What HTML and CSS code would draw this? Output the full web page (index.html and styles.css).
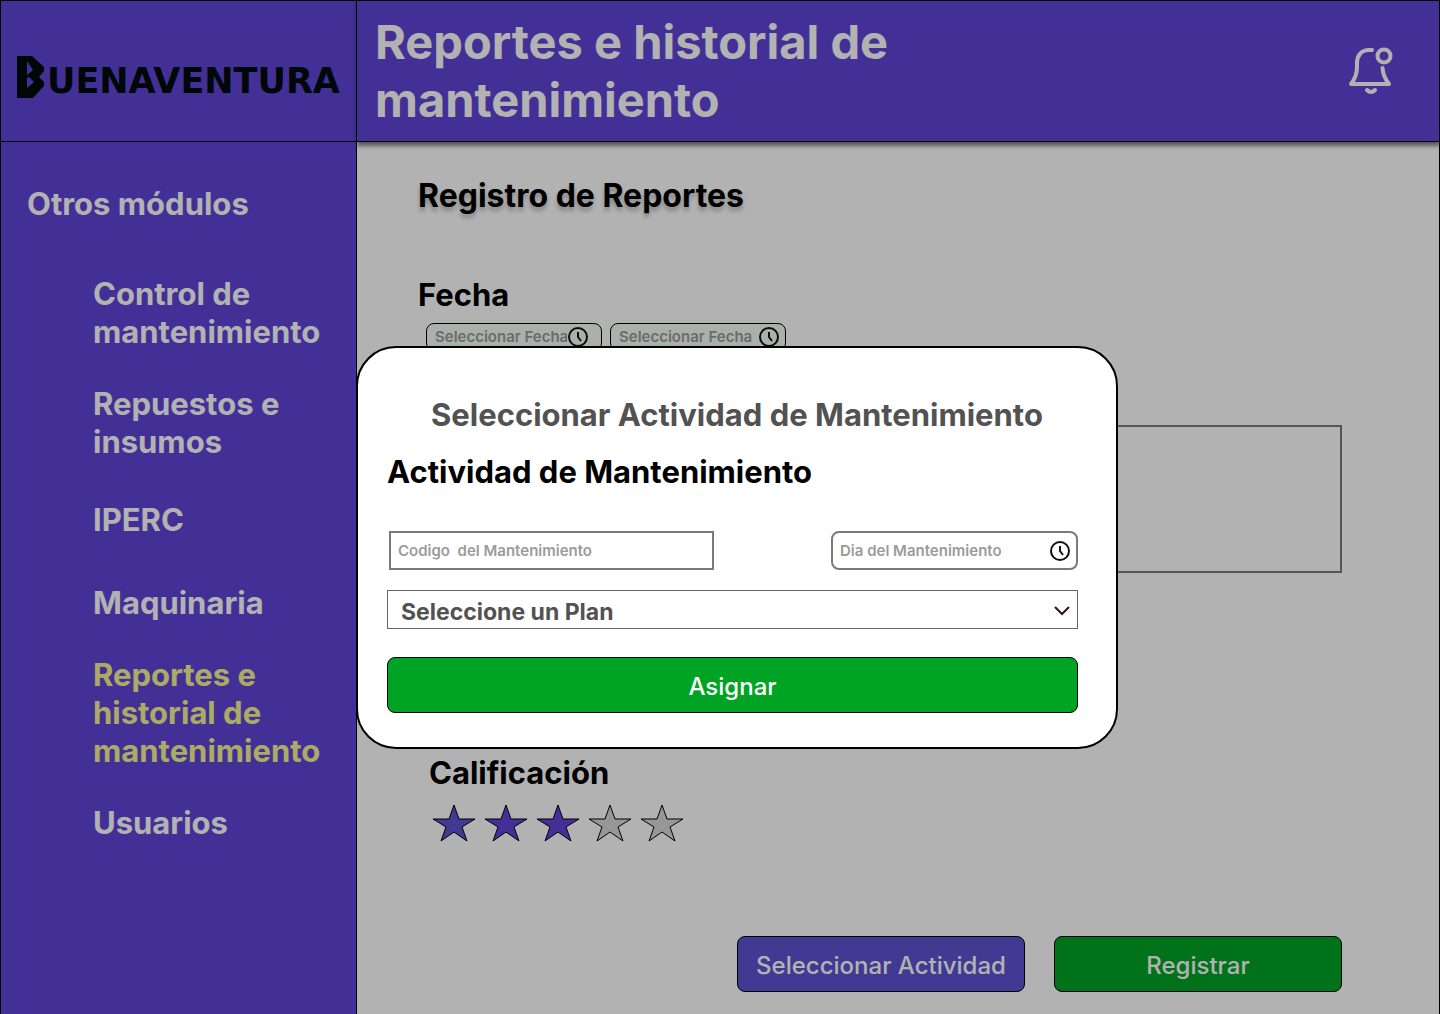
FILE: index.html
```html
<!DOCTYPE html>
<html lang="es">
<head>
<meta charset="utf-8">
<meta name="viewport" content="width=device-width, initial-scale=1">
<title>Reportes e historial de mantenimiento</title>
<link rel="stylesheet" href="styles.css">
</head>
<body>
<div class="app">
  <aside class="sidebar">
    <div class="brand" role="img" aria-label="Buenaventura">
      <svg class="brand-mark" viewBox="0 0 28 42" width="28" height="42" aria-hidden="true">
        <path fill-rule="evenodd" d="M0 0H15L27 11V15L22 21L27 26V30L16 42H0ZM10 5V19L16 14ZM10 22V32L17 26L12 21Z"/>
      </svg>
      <span class="brand-name">UENAVENTURA</span>
    </div>
    <nav class="menu" aria-labelledby="menu-title">
      <h2 class="menu-title" id="menu-title">Otros módulos</h2>
      <ul class="menu-list">
        <li class="menu-double"><a href="#control">Control de mantenimiento</a></li>
        <li class="menu-double"><a href="#repuestos">Repuestos e insumos</a></li>
        <li class="menu-single"><a href="#iperc">IPERC</a></li>
        <li class="menu-single"><a href="#maquinaria">Maquinaria</a></li>
        <li class="menu-double"><a class="active" href="#reportes" aria-current="page">Reportes e historial de mantenimiento</a></li>
        <li class="menu-single"><a href="#usuarios">Usuarios</a></li>
      </ul>
    </nav>
  </aside>

  <div class="content">
    <header class="topbar">
      <h1 class="title">Reportes e historial de mantenimiento</h1>
      <button class="bell" type="button" aria-label="Notificaciones">
        <svg viewBox="0 0 48 50" width="48" height="50" aria-hidden="true">
          <path d="M26 4H23C15 4 11 10 11 17V21C11 29 9 33 5 38H43C39 33 37 28 36.500 22"/>
          <circle cx="38" cy="10" r="6.500"/>
          <path d="M21 44Q25 48 29 44"/>
        </svg>
      </button>
    </header>

    <main class="main">
      <h2 class="section-title">Registro de Reportes</h2>
      <h3 class="label">Fecha</h3>
      <div class="dates">
        <div class="date date-from">
          <input type="text" placeholder="Seleccionar Fecha" aria-label="Fecha inicial">
          <svg class="clock" viewBox="0 0 22 22" width="22" height="22" aria-hidden="true"><circle cx="11" cy="11" r="9"/><path d="M11 6V11L14 15"/></svg>
        </div>
        <div class="date">
          <input type="text" placeholder="Seleccionar Fecha" aria-label="Fecha final">
          <svg class="clock" viewBox="0 0 22 22" width="22" height="22" aria-hidden="true"><circle cx="11" cy="11" r="9"/><path d="M11 6V11L14 15"/></svg>
        </div>
      </div>
      <textarea class="notes" aria-label="Descripción"></textarea>
      <section class="rating">
        <h3 class="label">Calificación</h3>
        <div class="stars" role="img" aria-label="3 de 5 estrellas">
          <svg class="star on first" viewBox="0 0 44 38" width="44" height="38"><path d="M22 1L27 15H43L30 23L35 37L22 28L9 37L14 23L1 15H17Z"/></svg>
          <svg class="star on" viewBox="0 0 44 38" width="44" height="38"><path d="M22 1L27 15H43L30 23L35 37L22 28L9 37L14 23L1 15H17Z"/></svg>
          <svg class="star on" viewBox="0 0 44 38" width="44" height="38"><path d="M22 1L27 15H43L30 23L35 37L22 28L9 37L14 23L1 15H17Z"/></svg>
          <svg class="star" viewBox="0 0 44 38" width="44" height="38"><path d="M22 1L27 15H43L30 23L35 37L22 28L9 37L14 23L1 15H17Z"/></svg>
          <svg class="star" viewBox="0 0 44 38" width="44" height="38"><path d="M22 1L27 15H43L30 23L35 37L22 28L9 37L14 23L1 15H17Z"/></svg>
        </div>
      </section>
      <div class="actions">
        <button class="btn btn-purple" type="button">Seleccionar Actividad</button>
        <button class="btn btn-green" type="button">Registrar</button>
      </div>
    </main>

    <div class="backdrop"></div>
    <section class="modal" role="dialog" aria-modal="true" aria-labelledby="modal-title">
      <h2 class="modal-title" id="modal-title">Seleccionar Actividad de Mantenimiento</h2>
      <h3 class="label">Actividad de Mantenimiento</h3>
      <form class="form">
        <div class="fields">
          <input class="code" type="text" placeholder="Codigo&nbsp; del Mantenimiento" aria-label="Código del mantenimiento">
          <div class="date day">
            <input type="text" placeholder="Dia del Mantenimiento" aria-label="Día del mantenimiento">
            <svg class="clock" viewBox="0 0 22 22" width="22" height="22" aria-hidden="true"><circle cx="11" cy="11" r="9"/><path d="M11 6V11L14 15"/></svg>
          </div>
        </div>
        <div class="plan">
          <select aria-label="Plan"><option>Seleccione un Plan</option></select>
          <svg class="chevron" viewBox="0 0 16 10" width="16" height="10" aria-hidden="true"><path d="M1 1L8 8L15 1"/></svg>
        </div>
        <button class="btn btn-green" type="button">Asignar</button>
      </form>
    </section>
  </div>
</div>
</body>
</html>
```
FILE: styles.css
```css
* {
  box-sizing: border-box;
}

body {
  margin: 0;
  font-family: Inter, "Liberation Sans", sans-serif;
  background: #fff;
  color: #000;
}

h1, h2, h3, ul {
  margin: 0;
  padding: 0;
}

h2, h3, .menu {
  font-size: 31px;
  line-height: 38px;
  font-weight: 700;
}

.app {
  display: grid;
  grid-template-columns: 357px 1fr;
  min-height: 100vh;
}

/* Sidebar */
.sidebar {
  background: #6045d9;
  color: #fff;
  border: 1px solid #000;
  border-bottom: 0;
}

.brand {
  display: flex;
  align-items: center;
  gap: 2px;
  height: 141px;
  padding: 12px 16px 0;
  border-bottom: 1px solid #000;
  color: #000b0b;
}

.brand-mark {
  flex: none;
  fill: currentColor;
}

.brand-name {
  padding-top: 8px;
  font: bold 35px/35px "DejaVu Sans", sans-serif;
}

.menu {
  padding: 43px 26px;
}

.menu-list {
  display: flex;
  flex-direction: column;
  padding: 52px 0 0 66px;
  list-style: none;
}

.menu-double {
  padding-bottom: 34px;
}

.menu-single {
  padding: 6px 0 39px;
}

.menu-single + .menu-double {
  margin-top: -5px;
}

.menu-single:last-child {
  padding: 0;
}

.menu a {
  color: inherit;
  text-decoration: none;
}

.menu .active {
  color: #f5f591;
}

/* Header */
.content {
  position: relative;
  display: flex;
  flex-direction: column;
}

.topbar {
  display: flex;
  align-items: center;
  justify-content: space-between;
  height: 142px;
  padding: 0 45px 0 18px;
  border: 1px solid #000;
  border-left: 0;
  background: #6045d9;
  color: #fff;
  box-shadow: 0 4px 4px rgba(0, 0, 0, 0.5);
}

.title {
  max-width: 620px;
  font-size: 47px;
  line-height: 58px;
  font-weight: 700;
}

.bell {
  padding: 0;
  border: 0;
  background: none;
  color: inherit;
}

.bell svg {
  display: block;
  fill: none;
  stroke: currentColor;
  stroke-width: 4;
  stroke-linecap: round;
  stroke-linejoin: round;
}

/* Report form */
.main {
  display: flex;
  flex: 1;
  flex-direction: column;
  padding: 35px 97px 22px 61px;
  border-right: 1px solid #000;
}

.section-title {
  margin-bottom: 61px;
  font-size: 32px;
  text-shadow: 0 4px 4px rgba(0, 0, 0, 0.25);
}

.dates {
  display: flex;
  gap: 8px;
  padding: 9px 8px 0;
}

.date {
  display: flex;
  align-items: center;
  width: 176px;
  height: 28px;
  padding: 0 5px 0 8px;
  border: 1px solid #000;
  border-radius: 8px;
  background: #f4fdf6;
}

.date-from {
  padding-right: 12px;
}

.date input {
  flex: 1;
  min-width: 0;
  padding: 0;
  border: 0;
  background: none;
}

input {
  font: 600 15px/18px Inter, "Liberation Sans", sans-serif;
}

input::placeholder {
  color: #9b9b9b;
  opacity: 1;
}

.clock {
  flex: none;
  fill: none;
  stroke: #111;
  stroke-width: 2;
}

.notes {
  display: block;
  height: 148px;
  margin-top: 74px;
  border: 2px solid #7a7a7a;
  background: none;
  resize: none;
}

.rating {
  padding: 181px 11px 0;
}

.stars {
  display: flex;
  gap: 8px;
  padding: 12px 3px;
}

.star {
  fill: #d9d9d9;
  stroke: #000;
}

.star.on {
  fill: #6045d9;
}

.star.first {
  fill: #5e53d3;
}

.actions {
  display: flex;
  justify-content: flex-end;
  gap: 29px;
  margin-top: auto;
}

.btn {
  width: 288px;
  height: 56px;
  padding: 4px 0 0;
  border: 1px solid #000;
  border-radius: 8px;
  color: #fff;
  font: 500 24px/30px Inter, "Liberation Sans", sans-serif;
}

.btn-purple {
  background: #5e53d3;
}

.btn-green {
  background: #00a424;
}

/* Dialog */
.backdrop {
  position: fixed;
  inset: 0;
  background: rgba(0, 0, 0, 0.3);
}

.modal {
  position: absolute;
  top: 346px;
  left: -1px;
  width: 762px;
  padding: 48px 29px 34px;
  border: 2px solid #000;
  border-radius: 40px;
  background: #fff;
}

.modal-title {
  margin-bottom: 19px;
  color: #525252;
  text-align: center;
}

.form {
  display: flex;
  flex-direction: column;
  padding: 40px 9px 0 0;
}

.fields {
  display: flex;
  align-items: center;
  justify-content: space-between;
  padding-left: 2px;
}

.code {
  width: 325px;
  height: 39px;
  padding: 0 7px;
  border: 2px solid #7a7a7a;
}

.day {
  width: 247px;
  height: 39px;
  padding: 0 5px 0 7px;
  border: 2px solid #7a7a7a;
  background: #fff;
}

.plan {
  position: relative;
  display: flex;
  margin: 20px 0 28px;
}

.plan select {
  width: 100%;
  height: 39px;
  padding: 4px 13px 0;
  border: 1px solid #666;
  border-radius: 0;
  appearance: none;
  background: #fff;
  color: #525252;
  font: 700 23px/30px Inter, "Liberation Sans", sans-serif;
}

.chevron {
  position: absolute;
  top: 16px;
  right: 8px;
  fill: none;
  stroke: #3a0f12;
  stroke-width: 2;
  pointer-events: none;
}

.form .btn {
  width: 100%;
}
```
